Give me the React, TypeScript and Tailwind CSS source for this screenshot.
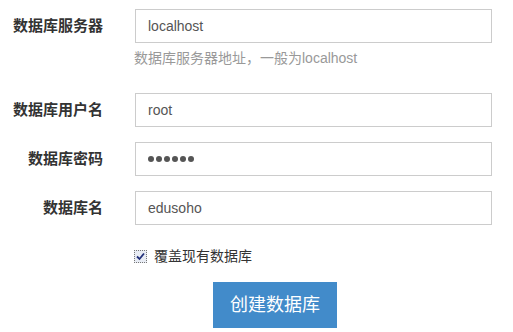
import React from 'react'

const FONT = { fontFamily: '"Liberation Sans", "Noto Sans CJK SC", sans-serif' }

function Field({ label, value, password }: { label: string; value: string; password?: boolean }) {
  return (
    <div className="flex items-center">
      <label className="w-[103px] text-right text-[15px] font-bold text-[#333] leading-[20px]">{label}</label>
      <div className="ml-[32px] flex h-[34px] w-[357px] items-center border border-[#ccc] bg-white px-[12px] text-[14px] text-[#555]">
        {password ? (
          <span className="flex gap-[2px]">
            {Array.from({ length: 6 }).map((_, i) => (
              <span key={i} className="h-[6px] w-[6px] rounded-full bg-[#555]" />
            ))}
          </span>
        ) : (
          <span>{value}</span>
        )}
      </div>
    </div>
  )
}

export default function App() {
  return (
    <div className="h-[332px] w-[513px] bg-white pt-[9px]" style={FONT}>
      <Field label="数据库服务器" value="localhost" />
      <p className="ml-[134px] mt-[5px] text-[14px] leading-[20px] text-[#999]">数据库服务器地址，一般为localhost</p>

      <div className="mt-[25px] flex flex-col gap-[15px]">
        <Field label="数据库用户名" value="root" />
        <Field label="数据库密码" value="" password />
        <Field label="数据库名" value="edusoho" />
      </div>

      {/* Overwrite checkbox */}
      <div className="ml-[134px] mt-[15px] flex h-[32px] items-center">
        <span className="flex h-[13px] w-[13px] items-center justify-center border border-dotted border-[#777] bg-[#e8ecf4]">
          <svg width="9" height="9" viewBox="0 0 9 9">
            <path d="M1 4.5 L3.5 7 L8 1.5" fill="none" stroke="#22307a" strokeWidth="1.8" />
          </svg>
        </span>
        <span className="ml-[7px] text-[14px] text-[#333]">覆盖现有数据库</span>
      </div>

      <button className="ml-[213px] mt-[10px] flex h-[46px] w-[124px] items-center justify-center bg-[#428bca] text-[18px] text-white">
        创建数据库
      </button>
    </div>
  )
}
